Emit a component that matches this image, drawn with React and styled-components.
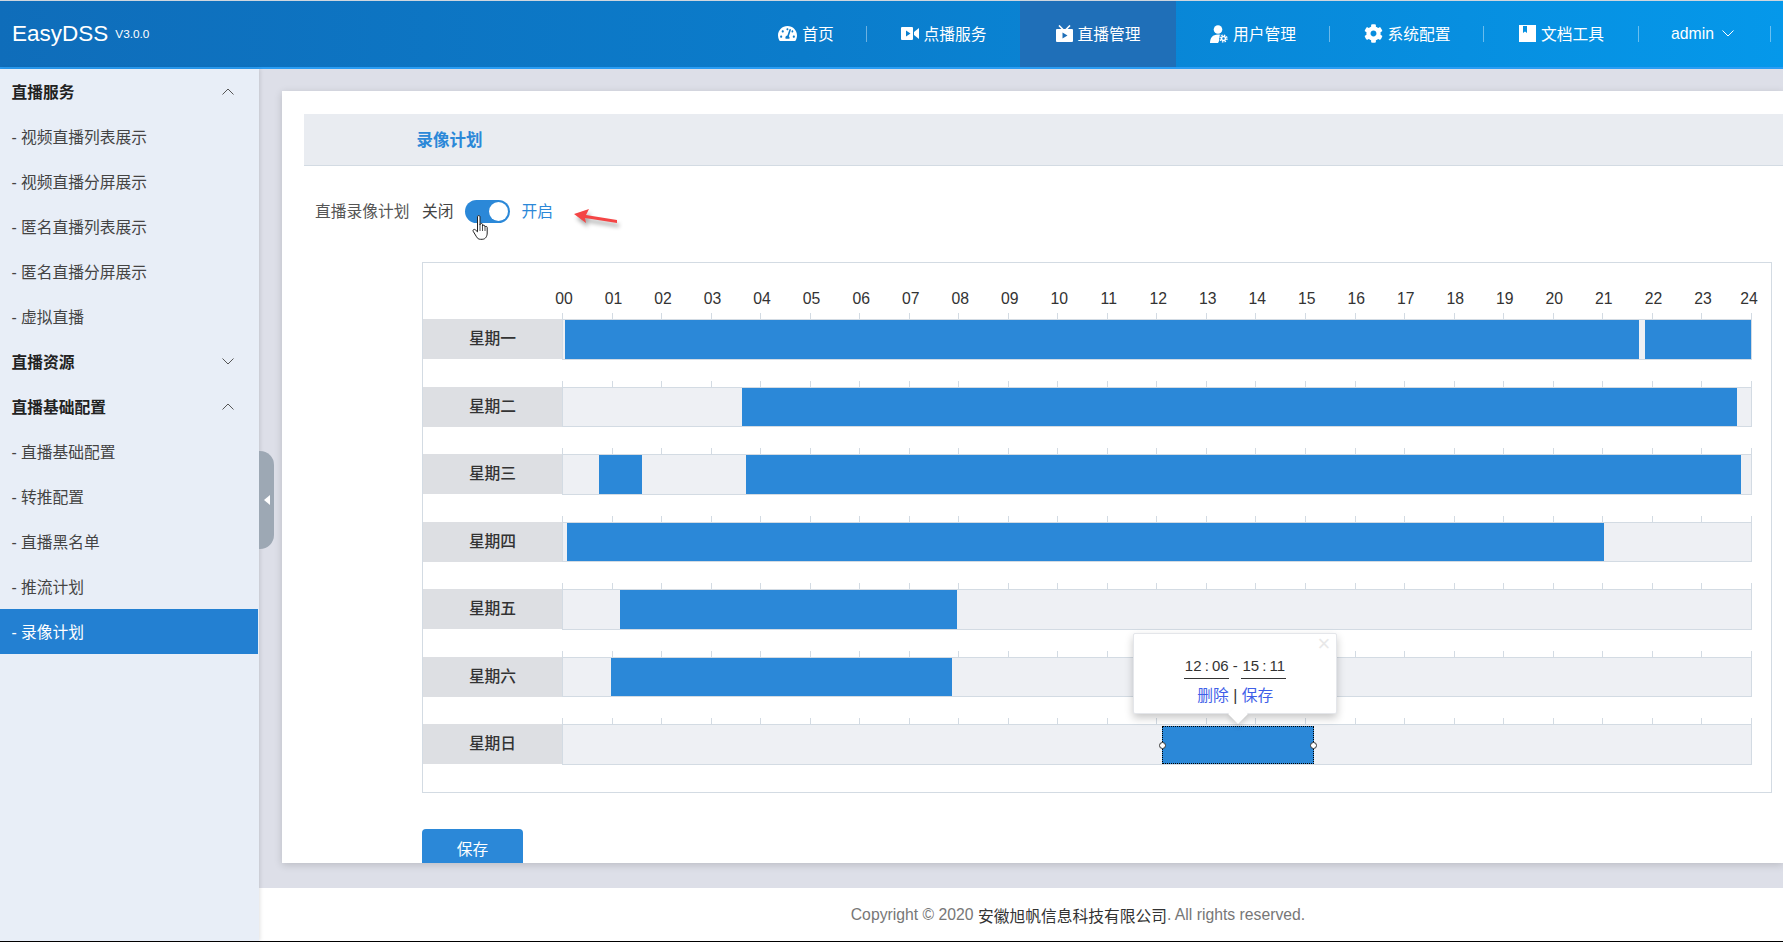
import React from 'react'
import styled, { createGlobalStyle } from 'styled-components'
import { FaTachometerAlt, FaCog } from 'react-icons/fa'

const GlobalStyle = createGlobalStyle`
html, body {
  margin: 0;
  padding: 0;
  background: #fff;
}
body {
  font-family: "Liberation Sans", "Noto Sans CJK SC", sans-serif;
  font-size: 15.75px;
  color: #333;
}
* {
  box-sizing: border-box;
}
`

const navItems = [
  { label: '首页', width: 122, icon: 'gauge', sep: true },
  { label: '点播服务', width: 153, icon: 'video' },
  { label: '直播管理', width: 156, icon: 'tv', active: true },
  { label: '用户管理', width: 154, icon: 'user', sep: true },
  { label: '系统配置', width: 154, icon: 'cog', sep: true },
  { label: '文档工具', width: 155, icon: 'book', sep: true },
]

const menu = [
  { label: '直播服务', group: true, open: true },
  { label: '- 视频直播列表展示' },
  { label: '- 视频直播分屏展示' },
  { label: '- 匿名直播列表展示' },
  { label: '- 匿名直播分屏展示' },
  { label: '- 虚拟直播' },
  { label: '直播资源', group: true },
  { label: '直播基础配置', group: true, open: true },
  { label: '- 直播基础配置' },
  { label: '- 转推配置' },
  { label: '- 直播黑名单' },
  { label: '- 推流计划' },
  { label: '- 录像计划', active: true },
]

// bar start / end in minutes of the day
const week = [
  { day: '星期一', bars: [[4, 1304], [1312, 1440]] },
  { day: '星期二', bars: [[218, 1423]] },
  { day: '星期三', bars: [[45, 97], [223, 1428]] },
  { day: '星期四', bars: [[6, 1262]] },
  { day: '星期五', bars: [[70, 478]] },
  { day: '星期六', bars: [[59, 472]] },
  { day: '星期日', bars: [], selected: [727, 911] },
]

const hours = Array.from({ length: 25 }, (_, i) => String(i).padStart(2, '0'))

// the track is 1189px for 24h, bars sit inside its 1px border
const PX_PER_MIN = 1189 / 1440

const barStyle = ([start, end]) => ({
  left: `${start * PX_PER_MIN - 1}px`,
  width: `${(end - start) * PX_PER_MIN}px`,
})

const VideoIcon = () => (
  <svg width="18" height="13" viewBox="0 0 18 13">
    <path fill="#fff" fillRule="evenodd" d="M1 0h10a1 1 0 0 1 1 1v11a1 1 0 0 1-1 1H1a1 1 0 0 1-1-1V1a1 1 0 0 1 1-1zm4 3.500v6l4.500-3z" />
    <path fill="#fff" d="M13 5l5-4v11l-5-4z" />
  </svg>
)

const TvIcon = () => (
  <svg width="17" height="17" viewBox="0 0 17 17">
    <path fill="#fff" fillRule="evenodd" d="M1 4h15a1 1 0 0 1 1 1v11a1 1 0 0 1-1 1H1a1 1 0 0 1-1-1V5a1 1 0 0 1 1-1zm5.500 3.500v6l5-3z" />
    <path stroke="#fff" strokeWidth="1.6" fill="none" d="M3 .5l4 4M14 .5l-4 4" />
  </svg>
)

const UserIcon = () => (
  <svg width="18" height="18" viewBox="0 0 18 18">
    <circle cx="8" cy="4.500" r="4.300" fill="#fff" />
    <path fill="#fff" d="M0 18c0-5 2.500-8.500 8-8.500 1.500 0 3 .3 4 1L8 18z" />
    <circle cx="13.500" cy="13.500" r="4.500" fill="#0884d6" />
    <circle cx="13.500" cy="13.500" r="2" fill="none" stroke="#fff" strokeWidth="1.500" />
    <circle cx="13.500" cy="13.500" r="3.500" fill="none" stroke="#fff" strokeWidth="1.300" strokeDasharray="1.500 1.250" />
  </svg>
)

const BookIcon = () => (
  <svg width="17" height="17" viewBox="0 0 17 17">
    <path fill="#fff" fillRule="evenodd" d="M0 0h17v17H0zM4 1v7l2-1.500L8 8V1z" />
  </svg>
)

const NavIcon = ({ name }) => {
  if (name === 'gauge') return <FaTachometerAlt size={19} color="#fff" />
  if (name === 'video') return <VideoIcon />
  if (name === 'tv') return <TvIcon />
  if (name === 'user') return <UserIcon />
  if (name === 'cog') return <FaCog size={19} color="#fff" />
  return <BookIcon />
}

const Chevron = ({ up, color = '#555', width = 12 }) => (
  <svg width={width} height={width / 2 + 1} viewBox="0 0 12 7">
    <path fill="none" stroke={color} strokeWidth="1" d={up ? 'M.5 6.500L6 1l5.500 5.500' : 'M.5 .5L6 6l5.500-5.500'} />
  </svg>
)

const App = () => {
  return (
    <>
      <GlobalStyle />
      <Page>
        <Header>
          <Logo>
            EasyDSS<Version>V3.0.0</Version>
          </Logo>
          <Nav>
            {navItems.map(item => (
              <NavItem key={item.label} $width={item.width} $active={item.active} $sep={item.sep}>
                <NavIcon name={item.icon} />
                {item.label}
              </NavItem>
            ))}
            <NavItem $width={132} $sep $gap={8} $padRight={5}>
              admin
              <Chevron color="#fff" />
            </NavItem>
          </Nav>
        </Header>
        <Body>
          <Sidebar>
            {menu.map(item =>
              item.group ? (
                <MenuGroup key={item.label}>
                  {item.label}
                  <Chevron up={item.open} />
                </MenuGroup>
              ) : (
                <MenuItem key={item.label} $active={item.active}>{item.label}</MenuItem>
              )
            )}
          </Sidebar>
          <Main>
            <CollapseHandle>
              <HandleArrow />
            </CollapseHandle>
            <Content>
              <Panel>
                <PanelHeading>
                  <PanelTitle>录像计划</PanelTitle>
                </PanelHeading>
                <FormRow>
                  <FormLabel>直播录像计划</FormLabel>
                  <span>关闭</span>
                  <Switch>
                    <Knob />
                    <HandCursor viewBox="0 0 18 25">
                      <path fill="#fff" stroke="#222" strokeWidth="1" d="M5.500 1.700c0-1.500 2.500-1.500 2.500 0V10l.2-.8c.3-1.200 2.300-1 2.300.3V11c.2-1.200 2.300-1.100 2.400.2v.8c.3-1 2.300-.8 2.300.5V18c0 3-1.500 6.300-5 6.300H8.500c-2 0-3.100-1-4-2.500L1.200 16.300c-.8-1.400 1-2.600 2.100-1.500l2.200 2z" />
                      <path fill="none" stroke="#222" strokeWidth=".8" d="M8 10v6M10.500 11v5M13 12v4" />
                    </HandCursor>
                  </Switch>
                  <OnLabel>开启</OnLabel>
                  <RedArrow viewBox="0 0 55 27">
                    <path fill="#f44545" d="M5 11L20 6l-3 6 31 5v3l-32-5 1 5z" />
                  </RedArrow>
                </FormRow>
                <ScheduleBox>
                  <HourRow>
                    {hours.map(h => <Hour key={h}>{h}</Hour>)}
                  </HourRow>
                  {week.map(row => (
                    <WeekRow key={row.day}>
                      <Ticks>
                        {hours.map(h => <Tick key={h} />)}
                      </Ticks>
                      <DayLabel>{row.day}</DayLabel>
                      <Track>
                        {row.bars.map(bar => <Bar key={bar[0]} style={barStyle(bar)} />)}
                        {row.selected && (
                          <SelectedBar style={barStyle(row.selected)}>
                            <Grip $side="left" />
                            <Grip $side="right" />
                            <Popover>
                              <CloseMark>×</CloseMark>
                              <TimeLine>
                                <TimeField>12 : 06</TimeField>
                                -
                                <TimeField>15 : 11</TimeField>
                              </TimeLine>
                              <PopLinks>
                                <PopLink>删除</PopLink> | <PopLink>保存</PopLink>
                              </PopLinks>
                            </Popover>
                          </SelectedBar>
                        )}
                      </Track>
                    </WeekRow>
                  ))}
                </ScheduleBox>
                <SaveButton>保存</SaveButton>
              </Panel>
            </Content>
            <Footer>
              Copyright © 2020&nbsp;<Company>安徽旭帆信息科技有限公司</Company>. All rights reserved.
            </Footer>
          </Main>
        </Body>
      </Page>
    </>
  )
}

export default App

const Page = styled.div`
height: 942px;
display: flex;
flex-direction: column;
overflow: hidden;
border-top: 1px solid #cfd6de;
border-bottom: 1px solid #000;
`

const Header = styled.header`
flex: 0 0 68px;
display: flex;
justify-content: space-between;
background: linear-gradient(90deg, #0f6dba 0%, #0b7ccb 45%, #0598ea 100%);
border-bottom: 2px solid #2a9df4;
color: #fff;
`

const Logo = styled.div`
padding-left: 12px;
display: flex;
align-items: center;
font-size: 22.5px;
`

const Version = styled.span`
margin-left: 7px;
font-size: 11.800px;
`

const Nav = styled.nav`
display: flex;
margin-right: 12px;
`

const NavItem = styled.div`
position: relative;
width: ${props => props.$width}px;
display: flex;
align-items: center;
justify-content: center;
gap: ${props => props.$gap || 5}px;
padding: 0 ${props => props.$padRight || 0}px 1px 0;
font-size: 15.75px;
background: ${props => props.$active ? '#1f6fb8' : 'transparent'};
&::after {
  content: '';
  display: ${props => props.$sep ? 'block' : 'none'};
  position: absolute;
  right: 0;
  top: 25px;
  width: 1px;
  height: 16px;
  background: rgba(255, 255, 255, 0.4);
}
`

const Body = styled.div`
flex: 1;
display: flex;
min-height: 0;
`

const Sidebar = styled.aside`
flex: 0 0 259px;
background: #e8eef7;
padding-right: 1px;
box-shadow: 1px 0 4px rgba(0, 0, 0, 0.12);
z-index: 2;
`

const MenuGroup = styled.div`
height: 45px;
display: flex;
align-items: center;
justify-content: space-between;
padding: 0 24px 0 11.500px;
font-size: 15.75px;
font-weight: 700;
color: #222;
`

const MenuItem = styled.div`
height: 45px;
display: flex;
align-items: center;
padding: 0 0 1px 11.500px;
color: ${props => props.$active ? '#fff' : '#444'};
background: ${props => props.$active ? '#2380d2' : 'transparent'};
`

const Main = styled.main`
position: relative;
flex: 1;
min-width: 0;
display: flex;
flex-direction: column;
`

const CollapseHandle = styled.div`
position: absolute;
left: 0;
top: 382px;
z-index: 3;
width: 15px;
height: 98px;
display: flex;
align-items: center;
justify-content: center;
background: #9da8b4;
border-radius: 0 14px 14px 0;
`

const HandleArrow = styled.div`
border-style: solid;
border-width: 5px 6px 5px 0;
border-color: transparent #fff transparent transparent;
`

const Content = styled.div`
flex: 1;
min-height: 0;
background: #dddfe8;
padding: 22px 0 25px 23px;
`

const Panel = styled.section`
height: 772px;
overflow: hidden;
background: #fff;
padding: 23px 0 0 22px;
box-shadow: 0 2px 8px rgba(0, 0, 0, 0.16);
`

const PanelHeading = styled.div`
height: 52px;
display: flex;
align-items: center;
padding-left: 112.500px;
background: #e9ecf1;
border-bottom: 1px solid #d3dbe3;
`

const PanelTitle = styled.h2`
margin: 0 0 1px;
font-size: 16.5px;
font-weight: 700;
color: #2b88d8;
`

const FormRow = styled.div`
height: 23px;
margin: 34px 0 0 11px;
display: flex;
align-items: center;
color: #444;
& > span, & > label {
  position: relative;
  top: -1px;
}
`

const FormLabel = styled.label`
width: 107px;
color: #555;
`

const Switch = styled.div`
position: relative;
width: 45px;
height: 23px;
margin: 0 12px 0 11px;
padding: 2px;
display: flex;
justify-content: flex-end;
background: #2b88d8;
border-radius: 12px;
`

const Knob = styled.div`
width: 19px;
height: 19px;
border-radius: 50%;
background: #fff;
`

const HandCursor = styled.svg`
position: absolute;
left: 7px;
top: 15px;
width: 18px;
height: 25px;
`

const OnLabel = styled.span`
color: #2b88d8;
`

const RedArrow = styled.svg`
width: 55px;
height: 27px;
margin: 10px 0 0 16px;
filter: drop-shadow(2px 4px 2px rgba(0, 0, 0, 0.35));
`

const ScheduleBox = styled.div`
width: 1350px;
height: 531px;
margin: 39px 0 0 118px;
padding-top: 27px;
border: 1px solid #d3dbe3;
`

const HourRow = styled.div`
height: 23px;
margin-left: 116.300px;
display: flex;
`

const Hour = styled.div`
flex: 0 0 49.52px;
text-align: center;
font-size: 15.75px;
line-height: 18px;
color: #333;
&:last-child {
  margin-left: -3.500px;
}
`

const WeekRow = styled.div`
height: 67.500px;
display: grid;
grid-template-columns: 139px 1190px;
grid-template-rows: 6px 40.500px;
`

const Ticks = styled.div`
grid-column: 2;
grid-row: 1;
display: flex;
justify-content: space-between;
`

const Tick = styled.div`
width: 1px;
background: #d3dbe3;
`

const DayLabel = styled.div`
grid-column: 1;
grid-row: 2;
height: 40px;
padding-bottom: 3px;
display: flex;
align-items: center;
justify-content: center;
background: #dddfe3;
font-weight: 500;
color: #333;
`

const Track = styled.div`
position: relative;
grid-column: 2;
grid-row: 2;
background: #eef0f4;
border: 1px solid #d3dbe3;
`

const Bar = styled.div`
position: absolute;
top: 0;
bottom: 0;
background: #2b88d8;
`

const SelectedBar = styled(Bar)`
top: 1px;
border: 1px dotted #000;
`

const Grip = styled.div`
position: absolute;
top: 50%;
${props => props.$side}: -4px;
width: 7px;
height: 7px;
margin-top: -3px;
border: 1.500px solid #333;
border-radius: 50%;
background: #fff;
&::before {
  content: '';
  position: absolute;
  z-index: -1;
  left: 1.500px;
  top: -7px;
  width: 1px;
  height: 18px;
  background: #444;
}
`

const Popover = styled.div`
position: absolute;
left: -30px;
bottom: calc(100% + 13px);
z-index: 4;
width: 204px;
height: 81px;
padding-top: 22px;
background: #fff;
border: 1px solid #e4e6ea;
border-radius: 2px;
box-shadow: 0 4px 8px rgba(0, 0, 0, 0.22);
text-align: center;
&::after {
  content: '';
  position: absolute;
  left: 97px;
  bottom: -8px;
  width: 14px;
  height: 14px;
  background: #fff;
  transform: rotate(45deg);
  box-shadow: 3px 3px 5px rgba(0, 0, 0, 0.12);
}
`

const CloseMark = styled.span`
position: absolute;
top: 0;
right: 6px;
font-size: 22px;
line-height: 20px;
color: #e8e8e8;
`

const TimeLine = styled.div`
display: flex;
justify-content: center;
align-items: flex-start;
gap: 3.500px;
font-size: 15px;
line-height: 19px;
color: #333;
`

const TimeField = styled.span`
width: 45px;
height: 23px;
white-space: nowrap;
word-spacing: -1px;
border-bottom: 1px solid #333;
`

const PopLinks = styled.div`
margin-top: 7px;
line-height: 20px;
color: #333;
`

const PopLink = styled.a`
color: #3f5fe8;
`

const SaveButton = styled.button`
display: block;
width: 101px;
height: 40px;
margin: 36px 0 0 118px;
padding: 0 0 2px;
border: 0;
border-radius: 4px;
background: #2b88d8;
color: #fff;
font: inherit;
`

const Footer = styled.footer`
flex: 0 0 53px;
padding: 1px 0 0 114px;
display: flex;
align-items: center;
justify-content: center;
background: #fff;
color: #777;
`

const Company = styled.span`
color: #333;
`
